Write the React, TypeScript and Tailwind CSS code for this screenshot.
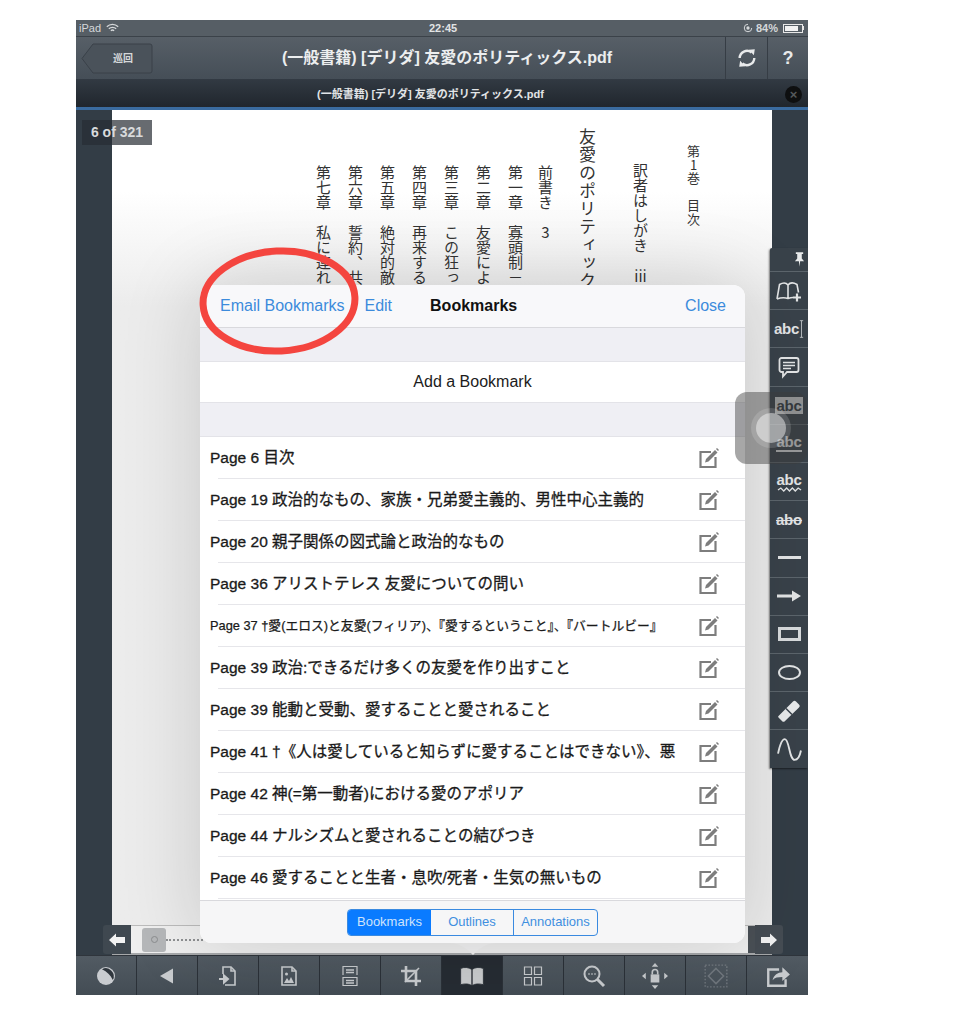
import type { ReactNode } from 'react'

const bookmarks = [
  'Page 6 目次',
  'Page 19 政治的なもの、家族・兄弟愛主義的、男性中心主義的',
  'Page 20 親子関係の図式論と政治的なもの',
  'Page 36 アリストテレス 友愛についての問い',
  'Page 37 †愛(エロス)と友愛(フィリア)、『愛するということ』、『バートルビー』',
  'Page 39 政治:できるだけ多くの友愛を作り出すこと',
  'Page 39 能動と受動、愛することと愛されること',
  'Page 41 †《人は愛していると知らずに愛することはできない》、悪',
  'Page 42 神(=第一動者)における愛のアポリア',
  'Page 44 ナルシズムと愛されることの結びつき',
  'Page 46 愛することと生者・息吹/死者・生気の無いもの',
]

const chapters = ['第七章　私に連れ', '第六章　誓約、共', '第五章　絶対的敵', '第四章　再来する', '第三章　この狂っ', '第二章　友愛によ', '第一章　寡頭制－']

function Icon({ children, className = 'w-6 h-6' }: { children: ReactNode; className?: string }) {
  return (
    <svg viewBox="0 0 24 24" className={className} fill="none" stroke="currentColor" strokeWidth="1.6">
      {children}
    </svg>
  )
}

function EditIcon() {
  return (
    <svg viewBox="0 0 24 24" className="w-[24px] h-[24px] shrink-0 text-[#7d7d7d]" fill="none" stroke="currentColor">
      <path d="M15 6H4.5v15h15V11" strokeWidth="2.2" />
      <path d="M9 16.5l1-3.5L19 4l2.5 2.5-9 9z" fill="currentColor" stroke="none" />
      <path d="M20.5 2.5l2 2" strokeWidth="1.5" />
    </svg>
  )
}

const toolbarIcons: ReactNode[] = [
  <svg key="tone" viewBox="0 0 24 24" className="w-6 h-6">
    <circle cx="12" cy="12" r="9" fill="#c9ccd0" />
    <path d="M8 5.2a8 8 0 0 1 10.8 10.800C16.500 11 13 7.500 8 5.200z" fill="#2f363d" />
  </svg>,
  <svg key="prev" viewBox="0 0 24 24" className="w-6 h-6"><path d="M18 4.5v15L5 12z" fill="#c8cbce" /></svg>,
  <Icon key="import">
    <path d="M7 10V3h8l4 4v14H9" />
    <path d="M15 3v4h4" />
    <path d="M3 15h7M8 11.500l4 3.500-4 3.500z" fill="currentColor" strokeWidth="2" />
  </Icon>,
  <Icon key="image">
    <path d="M5 3h10l4 4v14H5z" />
    <path d="M15 3v4h4" />
    <circle cx="9.500" cy="10" r="1.500" fill="currentColor" stroke="none" />
    <path d="M7 19l3-5 2 3 2-4 3 6z" fill="currentColor" stroke="none" />
  </Icon>,
  <Icon key="pages">
    <path d="M5 11V2.500h14V11M5 13.500h14v8H5z" strokeWidth="1.2" />
    <path d="M8 6h8M8 8.500h8M8 16.500h8M8 19h8" strokeWidth="1.4" />
  </Icon>,
  <Icon key="crop">
    <path d="M7 2v15h15M2 7h15v15" strokeWidth="2.6" />
    <path d="M6 18L20 4" strokeWidth="1.6" />
  </Icon>,
  <svg key="book" viewBox="0 0 24 24" className="w-[26px] h-[26px]">
    <path d="M1.500 5v15c4-1 8-1 10.500 1V6C9 4 5 3.500 1.500 5zM22.500 5v15c-4-1-8-1-10.500 1V6c2.500-2 6.500-2.500 10.500-1z" fill="#c9cbcd" stroke="#2a3037" strokeWidth="0.8" />
  </svg>,
  <Icon key="grid">
    <path d="M3.500 3h7v7.500h-7zM13.500 3h7v7.500h-7zM3.500 13.500h7V21h-7zM13.500 13.500h7V21h-7z" strokeWidth="1.2" />
  </Icon>,
  <svg key="search" viewBox="0 0 24 24" className="w-6 h-6" fill="none" stroke="currentColor">
    <circle cx="10" cy="10" r="7.500" strokeWidth="2" />
    <path d="M15.500 15.500L22 22" strokeWidth="3" />
    <path d="M6.500 10h1M9.500 10h1M12.500 10h1" strokeWidth="1.8" />
  </svg>,
  <svg key="lock" viewBox="0 0 24 24" className="w-[26px] h-[26px]" fill="currentColor">
    <path d="M12 0l3 3.500H9zM12 24l-3-3.500h6zM0 12l3.500-3v6zM24 12l-3.500 3V9z" />
    <path d="M8 10.500h8V18H8z" />
    <path d="M9.500 10.500V8.500a2.500 2.500 0 0 1 5 0v2" fill="none" stroke="currentColor" strokeWidth="1.5" />
  </svg>,
  <svg key="fit" viewBox="0 0 24 24" className="w-[26px] h-[26px] opacity-30" fill="none" stroke="currentColor">
    <path d="M2 2h20v20H2z" strokeWidth="1.3" strokeDasharray="1.5 1.5" />
    <path d="M12 5l7 7-7 7-7-7z" strokeWidth="1.4" />
  </svg>,
  <svg key="share" viewBox="0 0 24 24" className="w-[26px] h-[26px]" fill="none" stroke="currentColor">
    <path d="M13 6H3v15h16v-6" strokeWidth="2.2" />
    <path d="M7 16c1-5 5-7.500 9-7.500V4l7 6.500-7 6V13c-4 0-7 .5-9 3z" fill="currentColor" stroke="none" />
  </svg>,
]

function AbcLabel({ children, className = '' }: { children: ReactNode; className?: string }) {
  return <span className={`text-[15px] font-bold leading-none tracking-[-0.2px] text-[#e3e5e6] ${className}`}>{children}</span>
}

const sideTools: ReactNode[] = [
  <svg key="bookmark" viewBox="0 0 28 24" className="w-[28px] h-[24px] text-[#e3e5e6]" fill="none" stroke="currentColor" strokeWidth="1.6">
    <path d="M2 20l2.500-14.500C8 3.500 11 3.500 13 6c2-2.500 5.500-2.500 9-.5l1.500 8M13 6v13M2 20c4-1.500 8-1.500 11-.5 2-.7 3.500-1 5-1" />
    <path d="M22 14.500v8M18 18.500h8" strokeWidth="2.2" />
  </svg>,
  <div key="select" className="flex items-center">
    <AbcLabel>abc</AbcLabel>
    <svg viewBox="0 0 6 22" className="w-[5px] h-[20px] text-[#c9cdd0]" fill="none" stroke="currentColor" strokeWidth="1"><path d="M1 1h4M3 1v20M1 21h4" /></svg>
  </div>,
  <svg key="note" viewBox="0 0 24 24" className="w-[24px] h-[24px] text-[#e3e5e6]" fill="none" stroke="currentColor">
    <path d="M4.500 3h15a2 2 0 0 1 2 2v10a2 2 0 0 1-2 2H10l-4 4.500V17H4.500a2 2 0 0 1-2-2V5a2 2 0 0 1 2-2z" strokeWidth="1.8" />
    <path d="M6 7.500h12M6 10.500h12M6 13.500h8" strokeWidth="1.5" />
  </svg>,
  <AbcLabel key="highlight" className="bg-[#d4d6d8] !text-[#30373e] px-[1px] py-[1px]">abc</AbcLabel>,
  <AbcLabel key="underline" className="border-b-2 border-[#e3e5e6] pb-[1px]">abc</AbcLabel>,
  <div key="squiggle" className="flex flex-col items-center">
    <AbcLabel>abc</AbcLabel>
    <svg viewBox="0 0 26 5" className="w-[25px] h-[5px] text-[#e3e5e6]" fill="none" stroke="currentColor" strokeWidth="1.4"><path d="M1 3l3-2 3 3 3-3 3 3 3-3 3 3 3-3 3 2" /></svg>
  </div>,
  <AbcLabel key="strike" className="line-through">abo</AbcLabel>,
  <div key="line" className="w-[23px] h-[3px] bg-[#e3e5e6]" />,
  <svg key="arrow" viewBox="0 0 24 14" className="w-[24px] h-[14px] text-[#e3e5e6]" fill="currentColor"><path d="M0 5.500h15V1.500L24 7l-9 5.500v-4H0z" /></svg>,
  <div key="rect" className="w-[17px] h-[8px] border-[3px] border-[#d8dbdd] box-content" />,
  <div key="ellipse" className="w-[23px] h-[15px] border-2 border-[#e3e5e6] rounded-[50%]" />,
  <svg key="eraser" viewBox="0 0 24 24" className="w-[24px] h-[24px]"><path d="M1.500 17L16 2.500a2 2 0 0 1 3 0l3 3a2 2 0 0 1 0 3L8 22a2 2 0 0 1-3 0l-3.500-3.500a1 1 0 0 1 0-1.500z" fill="#e8eaeb" /><path d="M9 9.500l6 6" stroke="#3a434b" strokeWidth="1.5" /></svg>,
  <svg key="wave" viewBox="0 0 24 24" className="w-[25px] h-[25px] text-[#e3e5e6]" fill="none" stroke="currentColor" strokeWidth="1.8"><path d="M1 16C3 6 5 2 7.500 2 12 2 11.500 22 17 22c3 0 5-4 6-9" /></svg>,
]

function VerticalText({ children, className = '' }: { children: ReactNode; className?: string }) {
  return (
    <div className={`[writing-mode:vertical-rl] [text-orientation:upright] text-[#333] font-['Noto_Sans_CJK_JP',sans-serif] font-normal leading-[16px] shrink-0 ${className}`}>
      {children}
    </div>
  )
}

export default function App() {
  return (
    <div className="w-[978px] h-[1024px] bg-white pt-[20px] pl-[76px] overflow-hidden font-['Liberation_Sans','Noto_Sans_CJK_JP',sans-serif]">
      <div className="relative w-[732px] h-[975px] flex flex-col overflow-hidden bg-[#343e47]">
        {/* status bar */}
        <div className="h-[17px] shrink-0 bg-[#565e65] border-b border-[#3b4249] flex items-center justify-between px-[3px] text-[11px] text-[#d5d8da] relative">
          <div className="flex items-center gap-[5px]">
            <span>iPad</span>
            <svg viewBox="0 0 16 12" className="w-[13px] h-[10px]" fill="none" stroke="currentColor" strokeWidth="1.6">
              <path d="M1 4.500c4-4 10-4 14 0M3.500 7c2.500-2.500 6.500-2.500 9 0M6 9.300c1.200-1 2.800-1 4 0" />
            </svg>
          </div>
          <span className="absolute left-[353px] font-bold text-[#e2e4e5]">22:45</span>
          <div className="flex items-center gap-[3px] pr-[1px]">
            <svg viewBox="0 0 12 12" className="w-[10px] h-[10px]" fill="none" stroke="currentColor" strokeWidth="1.2">
              <path d="M10.500 6A4.500 4.500 0 1 1 6 1.500" />
              <circle cx="6" cy="6" r="2" fill="currentColor" stroke="none" />
            </svg>
            <span className="font-bold">84%</span>
            <div className="w-[20px] h-[9px] border border-[#e8e8e8] p-[1px] ml-[2px]">
              <div className="w-[84%] h-full bg-[#f2f2f2]" />
            </div>
            <div className="w-[1px] h-[4px] bg-[#e8e8e8] -ml-[3px]" />
          </div>
        </div>

        {/* nav bar */}
        <div className="h-[42px] shrink-0 bg-linear-to-b from-[#575f67] to-[#454e57] flex items-center relative">
          <div className="relative w-[72px] h-[31px] ml-[5px] flex items-center justify-center">
            <svg viewBox="0 0 72 31" className="absolute inset-0 w-full h-full">
              <path d="M12 1h57a2 2 0 0 1 2 2v25a2 2 0 0 1-2 2H12L1 15.500z" fill="#4a525a" stroke="#3a4149" />
            </svg>
            <span className="relative text-[10px] font-bold text-[#d5d8da] pl-[12px]">巡回</span>
          </div>
          <span className="absolute left-[206px] text-[16px] font-bold text-[#eceeef] whitespace-nowrap">(一般書籍) [デリダ] 友愛のポリティックス.pdf</span>
          <div className="ml-auto flex h-full">
            <div className="w-[42px] border-l border-[#363d45] flex items-center justify-center text-[#e8eaeb]">
              <svg viewBox="0 0 24 24" className="w-[22px] h-[22px]" fill="none" stroke="currentColor" strokeWidth="2.6">
                <path d="M4 12a8 8 0 0 1 13-6M20 12a8 8 0 0 1-13 6" />
                <path d="M14 3l6.500-.5-1 6.500zM10 21l-6.500.5 1-6.500z" fill="currentColor" stroke="none" />
              </svg>
            </div>
            <div className="w-[41px] border-l border-[#363d45] flex items-center justify-center text-[18px] font-bold text-[#e8eaeb]">?</div>
          </div>
        </div>

        {/* tab bar */}
        <div className="h-[28px] shrink-0 bg-linear-to-b from-[#323a43] to-[#20262d] flex items-center relative pt-[2px]">
          <span className="absolute left-[241px] text-[11px] font-bold text-[#e2e4e6] whitespace-nowrap">(一般書籍) [デリダ] 友愛のポリティックス.pdf</span>
          <div className="ml-auto mr-[6px] w-[17px] h-[17px] rounded-full bg-[#0e0f10] flex items-center justify-center text-[13px] font-bold leading-none text-[#55585b]">×</div>
        </div>
        <div className="h-[3px] shrink-0 bg-[#3a6b9f]" />

        {/* document area */}
        <div className="flex-1 flex min-h-0">
          <div className="w-[36px] shrink-0 bg-[#333d46]" />
          <div className="w-[660px] shrink-0 flex flex-col bg-[#f1f1f1]">
            <div className="flex-1 flex items-start pl-[203px] gap-[16px] overflow-hidden min-h-0 bg-linear-to-b from-white from-[10%] to-[#ececec] to-[24%]">
              {chapters.map(c => (
                <VerticalText key={c} className="text-[15px] mt-[55px] w-[16px]">{c}</VerticalText>
              ))}
              <VerticalText className="text-[15px] mt-[55px] w-[16px] -ml-[2px]">前書き　<span>3</span></VerticalText>
              <VerticalText className="text-[17px] tracking-[1px] mt-[18px] w-[18px] ml-[8px]">友愛のポリティックス</VerticalText>
              <VerticalText className="text-[15px] mt-[53px] w-[16px] ml-[21px]">
                訳者はしがき　<span className="[text-combine-upright:all]">iii</span>
              </VerticalText>
              <VerticalText className="text-[13px] tracking-[0.5px] mt-[35px] w-[16px] ml-[21px]">第1巻　目次</VerticalText>
            </div>
            <div className="h-[30px] shrink-0 bg-[#efefef] border-t border-[#bcbcbc] border-b-2 border-b-[#a6a8aa] flex items-center">
              <div className="w-[19px] h-full bg-[#4a5259]" />
              <div className="ml-[11px] w-[24px] h-[24px] rounded-[3px] bg-[#b5b7b9] flex items-center justify-center">
                <div className="w-[7px] h-[7px] rounded-full border border-[#8b8d8f]" />
              </div>
              <div className="flex-1 border-t-2 border-dotted border-[#8e9092] mr-[17px]" />
              <div className="w-[24px] h-full bg-[#4a5056]" />
            </div>
          </div>
          <div className="w-[36px] shrink-0 bg-[#333d46]" />
        </div>

        {/* bottom toolbar */}
        <div className="h-[40px] shrink-0 grid grid-cols-12 bg-linear-to-b from-[#525b63] to-[#434c54] border-t border-[#2f353c] text-[#c8cbce]">
          {toolbarIcons.map((icon, i) => (
            <div
              key={i}
              className={i === 6
                ? 'flex items-center justify-center border-r border-[#2b3138] bg-[#262c33]'
                : 'flex items-center justify-center border-r border-[#2b3138] last:border-r-0'}
            >
              {icon}
            </div>
          ))}
        </div>

        {/* slider arrows */}
        <div className="absolute left-[27px] top-[905px] w-[28px] h-[29px] bg-[#3f4850] rounded-l-[3px] flex items-center justify-center">
          <svg viewBox="0 0 16 14" className="w-[16px] h-[14px]"><path d="M0 7l7-6.500V4h9v6H7v3.500z" fill="#f2f2f2" /></svg>
        </div>
        <div className="absolute left-[679px] top-[905px] w-[28px] h-[29px] bg-[#454c53] rounded-r-[3px] flex items-center justify-center">
          <svg viewBox="0 0 16 14" className="w-[16px] h-[14px]"><path d="M16 7L9 .5V4H0v6h9v3.500z" fill="#f2f2f2" /></svg>
        </div>

        {/* page badge */}
        <div className="absolute left-[6px] top-[100px] w-[70px] h-[25px] bg-[#262c33]/70 flex items-center justify-center text-[14px] font-bold text-[#d8dadc]">6 of 321</div>

        {/* annotation tools */}
        <div className="absolute right-0 top-[228px] w-[38px] bg-[#39424a] shadow-[-1px_1px_2px_rgba(0,0,0,0.5)] flex flex-col rounded-tl-[2px]">
          <div className="h-[24px] flex items-center justify-end pr-[3px] border-b border-[#5c656c]">
            <svg viewBox="0 0 12 16" className="w-[11px] h-[15px]" fill="#e8eaeb"><path d="M2 0h8v2H8.500v5L11 10H6.700L6 16l-.7-6H1l2.500-3V2H2z" /></svg>
          </div>
          {sideTools.map((tool, i) => (
            <div key={i} className="h-[38.2px] flex items-center justify-center border-b border-[#5c656c] last:border-b-0">{tool}</div>
          ))}
        </div>

        {/* popover */}
        <svg viewBox="0 0 48 12" className="absolute left-[373px] top-[923px] w-[48px] h-[12px]">
          <path d="M0 0h48C36 0 30 6 24 12 18 6 12 0 0 0z" fill="#f3f3f4" />
        </svg>
        <div className="absolute left-[124px] top-[265px] w-[545px] h-[658px] rounded-[12px] overflow-hidden bg-white shadow-[0_0_80px_rgba(0,0,0,0.16)] flex flex-col">
          <div className="h-[43px] shrink-0 bg-[#f8f8fa] border-b border-[#d9d9dd] flex items-center pl-[20px] pr-[19px] text-[16px] text-[#3c8bdc]">
            <span>Email Bookmarks</span>
            <span className="ml-[20px]">Edit</span>
            <span className="ml-[38px] font-bold text-[#111]">Bookmarks</span>
            <span className="ml-auto">Close</span>
          </div>
          <div className="h-[33px] shrink-0 bg-[#efeff4]" />
          <div className="h-[42px] shrink-0 bg-white border-y border-[#e3e3e8] flex items-center justify-center text-[16px] text-[#1c1c1c]">Add a Bookmark</div>
          <div className="h-[33px] shrink-0 bg-[#efeff4]" />
          <div className="flex-1 min-h-0 border-t border-[#e3e3e8]">
            {bookmarks.map((b, i) => (
              <div key={b} className="h-[42px] ml-[18px] pr-[25px] flex items-center justify-between border-b border-[#e6e6ea]">
                <span className={i === 4
                  ? "-ml-[8px] text-[12.8px] [-webkit-text-stroke:0.25px_#1a1a1a] text-[#1a1a1a] whitespace-nowrap"
                  : "-ml-[8px] text-[15.5px] [-webkit-text-stroke:0.3px_#1a1a1a] text-[#1a1a1a] whitespace-nowrap"}>{b}</span>
                <EditIcon />
              </div>
            ))}
          </div>
          <div className="h-[43px] shrink-0 bg-[#f6f6f7] border-t border-[#d9d9dd] flex items-center justify-center">
            <div className="flex h-[27px] w-[251px] border border-[#3a8ae0] rounded-[4px] overflow-hidden text-[13px] text-[#3f8fe0]">
              <div className="w-[83px] bg-[#0a7bff] text-[#cfe3fb] flex items-center justify-center">Bookmarks</div>
              <div className="w-[83px] border-r border-[#3a8ae0] flex items-center justify-center">Outlines</div>
              <div className="flex-1 flex items-center justify-center">Annotations</div>
            </div>
          </div>
        </div>

        {/* assistive touch */}
        <div className="absolute left-[659px] top-[372px] w-[72px] h-[72px] rounded-[12px] bg-[#3c3c3c]/45 flex items-center justify-center">
          <div className="w-[40px] h-[40px] rounded-full bg-white/15 flex items-center justify-center">
            <div className="w-[30px] h-[30px] rounded-full bg-white/45" />
          </div>
        </div>
      </div>

      {/* red hand-drawn circle */}
      <svg viewBox="0 0 170 120" className="absolute left-[194px] top-[241px] w-[170px] h-[120px]" fill="none">
        <ellipse cx="85" cy="60" rx="76" ry="50" stroke="#f4453f" strokeWidth="7" transform="rotate(-3 85 60)" />
      </svg>
    </div>
  )
}
